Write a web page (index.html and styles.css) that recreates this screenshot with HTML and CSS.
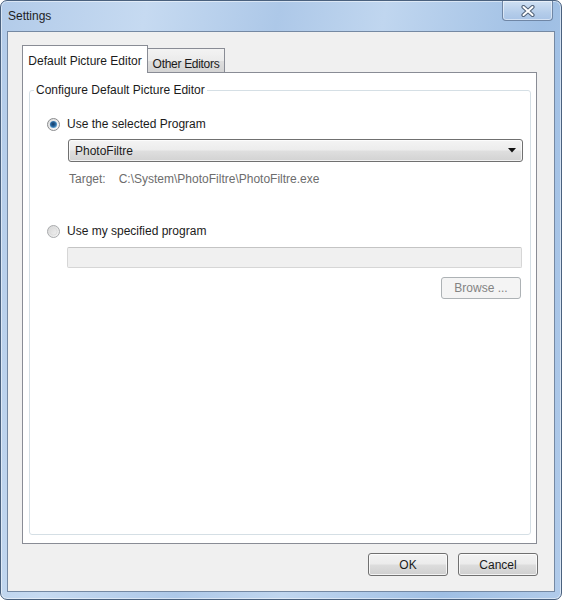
FILE: index.html
```html
<!DOCTYPE html>
<html>
<head>
<meta charset="utf-8">
<title>Settings</title>
<link rel="stylesheet" href="styles.css">
</head>
<body>
<div class="window">
  <div class="titlebar">
    <span class="title">Settings</span>
    <div class="close">
      <svg width="14" height="12" viewBox="0 0 14 12">
        <path d="M2.5 2 L11.5 10 M11.5 2 L2.5 10" stroke="#55667c" stroke-width="4.2" stroke-linecap="round"/>
        <path d="M2.5 2 L11.5 10 M11.5 2 L2.5 10" stroke="#ffffff" stroke-width="2" stroke-linecap="round"/>
      </svg>
    </div>
  </div>
  <div class="client">
    <div class="tabs">
      <div class="tab tab-active">Default Picture Editor</div>
      <div class="tab tab-other">Other Editors</div>
    </div>
    <div class="panel">
      <fieldset class="group">
        <legend>Configure Default Picture Editor</legend>
        <div class="group-body">
          <div class="option">
            <svg class="radio" width="13" height="13" viewBox="0 0 13 13">
              <defs>
                <linearGradient id="rbg1" x1="0" y1="0" x2="1" y2="1">
                  <stop offset="0" stop-color="#d9d9d9"/>
                  <stop offset="1" stop-color="#ffffff"/>
                </linearGradient>
                <radialGradient id="dot" cx="0.45" cy="0.45" r="0.6">
                  <stop offset="0" stop-color="#153a63"/>
                  <stop offset="0.55" stop-color="#28679f"/>
                  <stop offset="1" stop-color="#7cbbe3"/>
                </radialGradient>
              </defs>
              <circle cx="6.5" cy="6.5" r="6" fill="url(#rbg1)" stroke="#8a8c8e"/>
              <circle cx="6.5" cy="6.5" r="3.6" fill="url(#dot)"/>
            </svg>
            <span class="label">Use the selected Program</span>
          </div>
          <div class="select">
            <span>PhotoFiltre</span>
            <svg width="8" height="5" viewBox="0 0 8 5"><path d="M0 0 H8 L4 4.5 Z" fill="#111"/></svg>
          </div>
          <div class="target">
            <span>Target:</span>
            <span>C:\System\PhotoFiltre\PhotoFiltre.exe</span>
          </div>
          <div class="option option-second">
            <svg class="radio" width="13" height="13" viewBox="0 0 13 13">
              <defs>
                <linearGradient id="rbg2" x1="0" y1="0" x2="1" y2="1">
                  <stop offset="0" stop-color="#d4d4d4"/>
                  <stop offset="1" stop-color="#f7f7f7"/>
                </linearGradient>
              </defs>
              <circle cx="6.5" cy="6.5" r="6" fill="url(#rbg2)" stroke="#a9abad"/>
              <circle cx="6.5" cy="6.5" r="3.6" fill="none" stroke="#dedede" stroke-width="1"/>
            </svg>
            <span class="label">Use my specified program</span>
          </div>
          <div class="textbox"></div>
          <div class="btn btn-disabled browse">Browse ...</div>
        </div>
      </fieldset>
    </div>
    <div class="buttons">
      <div class="btn">OK</div>
      <div class="btn">Cancel</div>
    </div>
  </div>
</div>
</body>
</html>
```
FILE: styles.css
```css
* {
  box-sizing: border-box;
}

html, body {
  margin: 0;
  padding: 0;
}

body {
  width: 562px;
  height: 600px;
  background: #ffffff;
  font-family: "Liberation Sans", Arial, sans-serif;
  font-size: 12px;
  color: #1b1b1b;
}

.window {
  width: 562px;
  height: 600px;
  display: flex;
  flex-direction: column;
  border: 1px solid #4a617e;
  border-radius: 7px;
  overflow: hidden;
  background: linear-gradient(100deg, #b2cbe9 0%, #c6daf1 22%, #adc8e8 42%, #c0d6ef 58%, #9fbfe4 82%, #b1cbea 100%);
  box-shadow: inset 0 0 0 1px rgba(255, 255, 255, 0.5);
}

.titlebar {
  height: 30px;
  display: flex;
  justify-content: space-between;
  align-items: flex-start;
  padding-left: 7px;
}

.title {
  padding-top: 7px;
  line-height: 16px;
  color: #1e1e1e;
}

.close {
  width: 51px;
  height: 20px;
  margin-right: 8px;
  display: flex;
  align-items: center;
  justify-content: center;
  border: 1px solid #6f86a5;
  border-top: none;
  border-radius: 0 0 4px 4px;
  background: linear-gradient(#cfe0f3, #b5cdea 60%, #a9c4e6);
  box-shadow: inset 0 0 0 1px rgba(255, 255, 255, 0.5);
}

.client {
  flex: 1;
  margin: 0 6px 7px 6px;
  border: 1px solid #7589a3;
  background: #f0f0f0;
  padding: 13px 17px 15px 14px;
  display: flex;
  flex-direction: column;
}

.tabs {
  height: 27px;
  display: flex;
  align-items: flex-end;
}

.tab {
  border: 1px solid #898c95;
  border-bottom: none;
  text-align: center;
  line-height: 16px;
  white-space: nowrap;
}

.tab-active {
  position: relative;
  z-index: 1;
  width: 126px;
  height: 28px;
  margin-bottom: -1px;
  padding-top: 7px;
  background: #ffffff;
}

.tab-other {
  width: 78px;
  height: 24px;
  margin-left: -1px;
  padding-top: 7px;
  background: linear-gradient(#f3f3f3, #ebebeb 50%, #dedede 52%, #d4d4d4);
  letter-spacing: -0.3px;
}

.panel {
  flex: 1;
  border: 1px solid #898c95;
  background: #ffffff;
  padding: 9px 5px 8px 6px;
  display: flex;
  flex-direction: column;
}

.group {
  flex: 1;
  margin: 0;
  padding: 0;
  min-width: 0;
  border: 1px solid #d5dfe5;
  border-radius: 3px;
}

.group legend {
  margin-left: 4px;
  padding: 0 2px;
  line-height: 16px;
}

.group-body {
  display: flex;
  flex-direction: column;
  padding: 18px 7px 0 17px;
}

.option {
  height: 16px;
  display: flex;
  align-items: center;
  gap: 7px;
}

.option-second {
  margin-top: 36px;
}

.radio {
  flex: none;
}

.select {
  margin-top: 7px;
  margin-left: 21px;
  height: 23px;
  display: flex;
  align-items: center;
  justify-content: space-between;
  padding: 0 6px 0 6px;
  border: 1px solid #707070;
  border-radius: 3px;
  background: linear-gradient(#f4f4f4, #ececec 48%, #dfdfdf 52%, #d2d2d2);
  box-shadow: inset 0 0 0 1px rgba(255, 255, 255, 0.7);
}

.target {
  margin-top: 9px;
  margin-left: 22px;
  line-height: 16px;
  color: #6d6d6d;
  display: flex;
  gap: 13px;
}

.textbox {
  margin-top: 8px;
  margin-left: 20px;
  margin-right: 1px;
  height: 21px;
  border: 1px solid #d6d6d6;
  border-top-color: #c4c4c4;
  border-radius: 2px;
  background: #f0f0f0;
}

.btn {
  width: 80px;
  height: 23px;
  display: flex;
  align-items: center;
  justify-content: center;
  border: 1px solid #707070;
  border-radius: 3px;
  background: linear-gradient(#f3f3f3, #ebebeb 48%, #dddddd 52%, #cfcfcf);
  box-shadow: inset 0 0 0 1px rgba(255, 255, 255, 0.75);
  color: #1b1b1b;
}

.btn-disabled {
  border-color: #adb2b5;
  background: #f4f4f4;
  box-shadow: none;
  color: #838383;
}

.browse {
  align-self: flex-end;
  height: 22px;
  margin-top: 9px;
  margin-right: 2px;
}

.buttons {
  display: flex;
  justify-content: flex-end;
  gap: 10px;
  margin-top: 9px;
  margin-right: -1px;
}
```
